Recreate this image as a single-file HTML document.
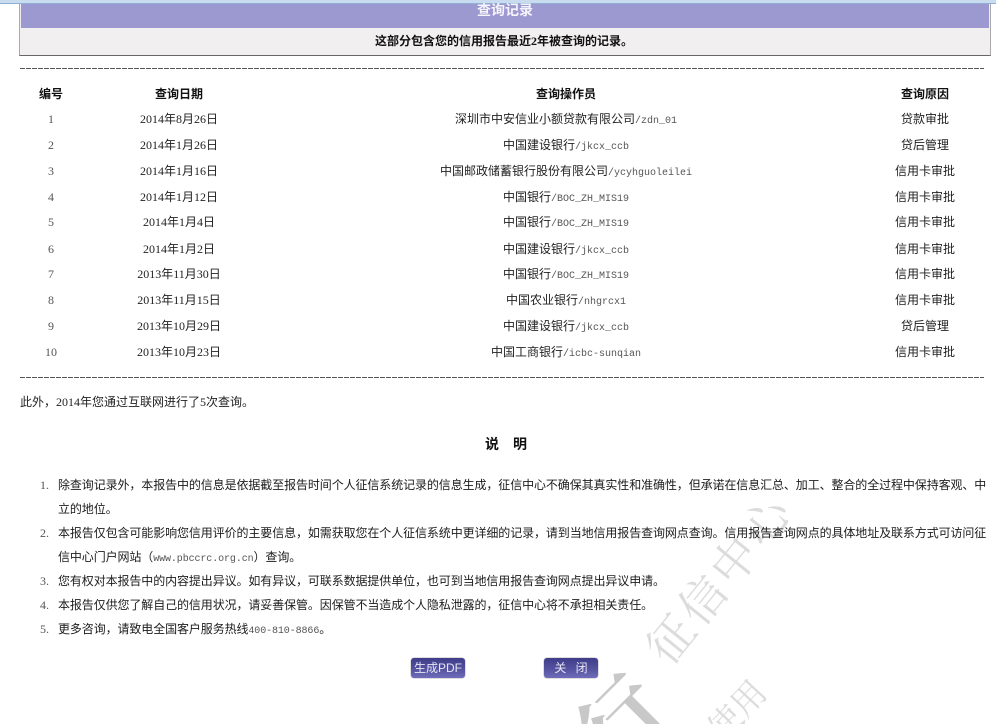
<!DOCTYPE html>
<html lang="zh"><head><meta charset="utf-8"><title>查询记录</title>
<style>
html,body{margin:0;padding:0;background:#fff;width:996px;height:724px;overflow:hidden}
#p{position:absolute;left:0;top:0;width:996px;height:724px;overflow:hidden;font:12px/16px "Liberation Serif","WenQuanYi Zen Hei","Noto Sans CJK SC",serif;color:#222}
#p div{position:absolute;white-space:nowrap}
.g{color:#555}
.m{font-family:"Liberation Mono","WenQuanYi Zen Hei",monospace;font-size:10px;color:#555}
.c{transform:translateX(-50%)}
.h{font-weight:bold;color:#111}
.d{left:20px;width:964px;height:1px;background:repeating-linear-gradient(90deg,#555 0 5px,#fff 5px 6px)}
.l{left:58px;width:928px;letter-spacing:-.1px;text-align:justify;text-align-last:justify;color:#1c1c1c}
.a{width:auto!important;text-align-last:left}
.n{left:40px;color:#555}
svg{position:absolute;left:0;top:0;overflow:hidden}
svg text{fill:#dcdcdc;font-family:"Noto Serif CJK SC",serif;text-anchor:middle;dominant-baseline:central}
.b{width:54px;height:20px;top:658px;border-radius:3px;background:linear-gradient(#3f3c8a,#55539f 55%,#6f6dba);color:#e6e6f4;text-align:center;line-height:20px;font-family:"Liberation Sans","WenQuanYi Zen Hei",sans-serif;box-shadow:0 0 1px #334}
</style></head><body><div id="p">
<svg width="996" height="724" viewBox="0 0 996 724">
<text transform="translate(718,577) rotate(-51)" font-size="46" letter-spacing="4.5">征信中心</text>
<text transform="translate(735,709) rotate(-47)" font-size="34">使用</text>
<text transform="translate(618,718) rotate(-45)" font-size="85" font-weight="bold" style="fill:#c8c8c8">行</text>
</svg>
<div style="left:0;top:0;width:996px;height:3px;background:#c9dbee;border-bottom:1px solid #8fb0d4"></div>
<div style="left:19px;top:4px;width:972px;height:52px;box-sizing:border-box;border:1px solid #aaa;border-bottom-color:#666;border-top:0;background:#f1efef"></div>
<div style="left:21px;top:4px;width:968px;height:24px;background:#9c98d0"></div>
<div class="c h" style="left:505px;top:4px;color:#f4f4fb;font-size:14px">查询记录</div>
<div class="c h" style="left:504px;top:33px;font-size:12px">这部分包含您的信用报告最近2年被查询的记录。</div>
<div class="d" style="top:68px"></div>

<div class="c h" style="left:51px;top:86px">编号</div><div class="c h" style="left:179px;top:86px">查询日期</div><div class="c h" style="left:566px;top:86px">查询操作员</div><div class="c h" style="left:925px;top:86px">查询原因</div>

<div class="c g" style="left:51px;top:111px">1</div><div class="c" style="left:179px;top:111px">2014年8月26日</div><div class="c" style="left:566px;top:111px">深圳市中安信业小额贷款有限公司<span class="m">/zdn_01</span></div><div class="c" style="left:925px;top:111px">贷款审批</div>
<div class="c g" style="left:51px;top:137px">2</div><div class="c" style="left:179px;top:137px">2014年1月26日</div><div class="c" style="left:566px;top:137px">中国建设银行<span class="m">/jkcx_ccb</span></div><div class="c" style="left:925px;top:137px">贷后管理</div>
<div class="c g" style="left:51px;top:163px">3</div><div class="c" style="left:179px;top:163px">2014年1月16日</div><div class="c" style="left:566px;top:163px">中国邮政储蓄银行股份有限公司<span class="m">/ycyhguoleilei</span></div><div class="c" style="left:925px;top:163px">信用卡审批</div>
<div class="c g" style="left:51px;top:189px">4</div><div class="c" style="left:179px;top:189px">2014年1月12日</div><div class="c" style="left:566px;top:189px">中国银行<span class="m">/BOC_ZH_MIS19</span></div><div class="c" style="left:925px;top:189px">信用卡审批</div>
<div class="c g" style="left:51px;top:214px">5</div><div class="c" style="left:179px;top:214px">2014年1月4日</div><div class="c" style="left:566px;top:214px">中国银行<span class="m">/BOC_ZH_MIS19</span></div><div class="c" style="left:925px;top:214px">信用卡审批</div>
<div class="c g" style="left:51px;top:241px">6</div><div class="c" style="left:179px;top:241px">2014年1月2日</div><div class="c" style="left:566px;top:241px">中国建设银行<span class="m">/jkcx_ccb</span></div><div class="c" style="left:925px;top:241px">信用卡审批</div>
<div class="c g" style="left:51px;top:266px">7</div><div class="c" style="left:179px;top:266px">2013年11月30日</div><div class="c" style="left:566px;top:266px">中国银行<span class="m">/BOC_ZH_MIS19</span></div><div class="c" style="left:925px;top:266px">信用卡审批</div>
<div class="c g" style="left:51px;top:292px">8</div><div class="c" style="left:179px;top:292px">2013年11月15日</div><div class="c" style="left:566px;top:292px">中国农业银行<span class="m">/nhgrcx1</span></div><div class="c" style="left:925px;top:292px">信用卡审批</div>
<div class="c g" style="left:51px;top:318px">9</div><div class="c" style="left:179px;top:318px">2013年10月29日</div><div class="c" style="left:566px;top:318px">中国建设银行<span class="m">/jkcx_ccb</span></div><div class="c" style="left:925px;top:318px">贷后管理</div>
<div class="c g" style="left:51px;top:344px">10</div><div class="c" style="left:179px;top:344px">2013年10月23日</div><div class="c" style="left:566px;top:344px">中国工商银行<span class="m">/icbc-sunqian</span></div><div class="c" style="left:925px;top:344px">信用卡审批</div>

<div class="d" style="top:377px"></div>
<div style="left:20px;top:394px">此外，2014年您通过互联网进行了5次查询。</div>
<div class="h" style="left:485px;top:438px;font-size:14px">说</div><div class="h" style="left:513px;top:438px;font-size:14px">明</div>

<div class="n" style="top:477px">1.</div>
<div class="l" style="top:477px">除查询记录外，本报告中的信息是依据截至报告时间个人征信系统记录的信息生成，征信中心不确保其真实性和准确性，但承诺在信息汇总、加工、整合的全过程中保持客观、中</div>
<div class="l a" style="top:501px">立的地位。</div>
<div class="n" style="top:525px">2.</div>
<div class="l" style="top:525px">本报告仅包含可能影响您信用评价的主要信息，如需获取您在个人征信系统中更详细的记录，请到当地信用报告查询网点查询。信用报告查询网点的具体地址及联系方式可访问征</div>
<div class="l a" style="top:549px">信中心门户网站（<span class="m">www.pbccrc.org.cn</span>）查询。</div>
<div class="n" style="top:573px">3.</div>
<div class="l a" style="top:573px">您有权对本报告中的内容提出异议。如有异议，可联系数据提供单位，也可到当地信用报告查询网点提出异议申请。</div>
<div class="n" style="top:597px">4.</div>
<div class="l a" style="top:597px">本报告仅供您了解自己的信用状况，请妥善保管。因保管不当造成个人隐私泄露的，征信中心将不承担相关责任。</div>
<div class="n" style="top:621px">5.</div>
<div class="l a" style="top:621px">更多咨询，请致电全国客户服务热线<span class="m">400-810-8866</span>。</div>

<div class="b" style="left:411px">生成PDF</div>
<div class="b" style="left:544px;word-spacing:6px">关 闭</div>
</div></body></html>
